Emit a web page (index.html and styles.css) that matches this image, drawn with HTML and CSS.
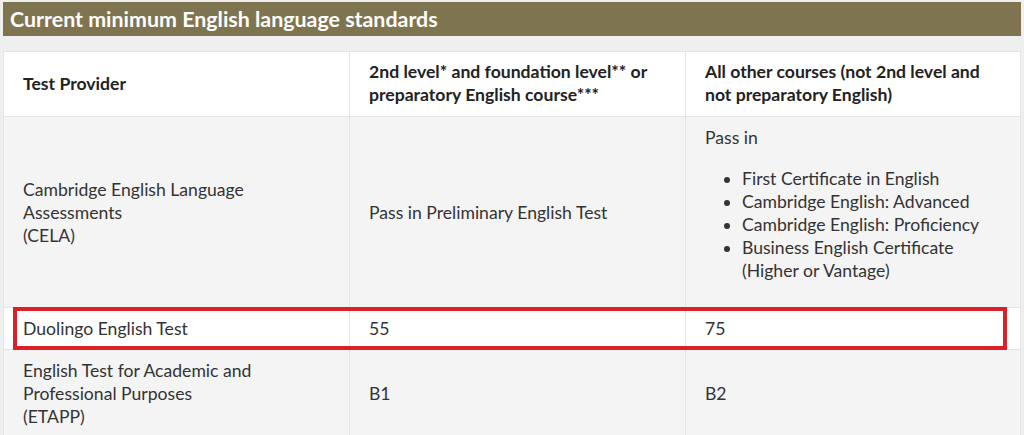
FILE: index.html
```html
<!DOCTYPE html>
<html lang="en">
<head>
<meta charset="utf-8">
<title>Current minimum English language standards</title>
<link rel="stylesheet" href="styles.css">
</head>
<body>
<div class="page">
  <h2 class="title">Current minimum English language standards</h2>
  <table class="standards">
    <colgroup>
      <col class="c1"><col class="c2"><col class="c3">
    </colgroup>
    <thead>
      <tr class="head">
        <th>Test Provider</th>
        <th>2nd level* and foundation level** or preparatory English course***</th>
        <th>All other courses (not 2nd level and not preparatory English)</th>
      </tr>
    </thead>
    <tbody>
      <tr class="odd">
        <td>Cambridge English Language<br>Assessments<br>(CELA)</td>
        <td>Pass in Preliminary English Test</td>
        <td>
          <p class="lead">Pass in</p>
          <ul class="bullets">
            <li>First Certificate in English</li>
            <li>Cambridge English: Advanced</li>
            <li>Cambridge English: Proficiency</li>
            <li>Business English Certificate<br>(Higher or Vantage)</li>
          </ul>
        </td>
      </tr>
      <tr class="even highlight">
        <td>Duolingo English Test</td>
        <td>55</td>
        <td>75</td>
      </tr>
      <tr class="odd">
        <td>English Test for Academic and<br>Professional Purposes<br>(ETAPP)</td>
        <td>B1</td>
        <td>B2</td>
      </tr>
    </tbody>
  </table>
</div>
</body>
</html>
```
FILE: styles.css
```css
html, body {
  margin: 0;
  padding: 0;
  background: #efefef;
}
.page {
  padding: 2px 3px 0 3px;
  font-family: Lato, "Open Sans", "Liberation Sans", sans-serif;
  color: #333;
  height: 433px;
  overflow: hidden;
}
.title {
  margin: 0 0 15px 0;
  height: 34px;
  line-height: 34px;
  padding: 0 7px;
  background: #7f7450;
  color: #fff;
  font-size: 21.4px;
  font-weight: 700;
}
.standards {
  width: 1017px;
  border-collapse: collapse;
  table-layout: fixed;
  font-size: 17.6px;
  line-height: 23px;
}
.c1 { width: 346px; }
.c2 { width: 336px; }
.c3 { width: 335px; }
.standards th,
.standards td {
  border: 1px solid #e4e4e4;
  padding: 9px 19px;
  text-align: left;
  vertical-align: middle;
}
.standards th {
  padding-top: 8px;
  padding-bottom: 10px;
  font-weight: 700;
  color: #222;
}
.head { background: #fff; }
.odd { background: #f4f4f4; }
.even { background: #fff; }
.lead { margin: 0 0 18px 0; }
.bullets {
  margin: 0 0 16px 0;
  padding-left: 37px;
}
.highlight { position: relative; }
.highlight::after {
  content: "";
  position: absolute;
  left: 9px;
  right: 14px;
  top: -1px;
  bottom: 0;
  border: 4px solid #dd2027;
  pointer-events: none;
}
```
